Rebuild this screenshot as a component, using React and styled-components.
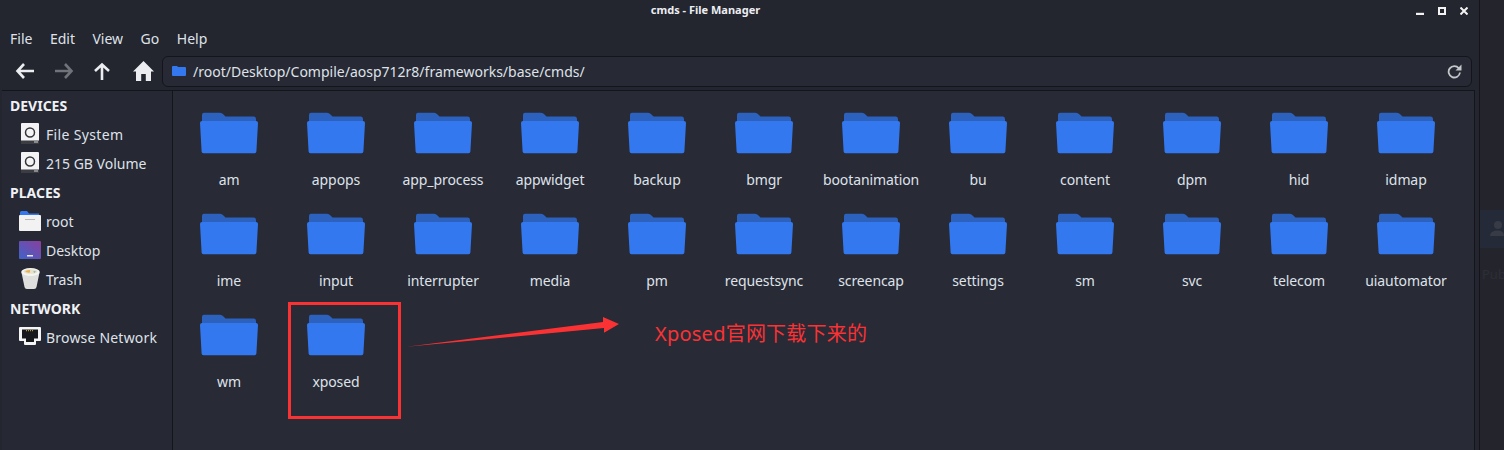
import React from "react";
import styled, { createGlobalStyle } from "styled-components";

const GlobalStyle = createGlobalStyle`
  html, body {
    margin: 0;
    padding: 0;
    background: #24252c;
    overflow: hidden;
  }
  * { box-sizing: border-box; }
`;

const Page = styled.div`
  position: relative;
  display: flex;
  width: 1504px;
  height: 450px;
  overflow: hidden;
  font-family: "Noto Sans", sans-serif;
  font-size: 14px;
  color: #e6e8ee;
`;

const Window = styled.div`
  width: 1480px;
  height: 450px;
  flex: none;
  display: flex;
  flex-direction: column;
  background: #23252f;
  border-right: 1px solid #14151b;
`;

const Backdrop = styled.div`
  flex: 1;
  min-width: 0;
  overflow: hidden;
  display: flex;
  flex-direction: column;
  padding-top: 210px;
  background: #24252c;
  color: #2c2e36;
  font-size: 13px;
`;

const BackdropTile = styled.div`
  height: 38px;
  margin-bottom: 17px;
  padding: 11px 0 0 10px;
  background: #242a38;
  color: #363b46;
`;

const BackdropLabel = styled.span`
  padding-left: 2px;
`;

const TitleBar = styled.div`
  height: 26px;
  flex: none;
  display: flex;
  align-items: center;
  position: relative;
  justify-content: center;
  font-size: 11px;
  font-weight: 700;
  color: #eceef2;
  padding: 0 68px 8px 0;
`;

const WindowButtons = styled.div`
  position: absolute;
  top: 7px;
  right: 11px;
  display: flex;
  align-items: flex-start;
  gap: 14px;
`;

const MenuBar = styled.div`
  height: 26px;
  flex: none;
  display: flex;
  gap: 17.5px;
  padding: 0 0 2px 10px;
  align-items: center;
  font-size: 14px;
  color: #dfe2e9;
`;

const Toolbar = styled.div`
  height: 38px;
  flex: none;
  display: flex;
  align-items: center;
  padding: 0 7px 0 15px;
`;

const NavButton = styled.div`
  width: ${(props) => props.$width}px;
  height: 24px;
  display: flex;
  align-items: center;
`;

const PathBar = styled.div`
  flex: 1;
  height: 31px;
  margin-left: 7px;
  display: flex;
  align-items: center;
  gap: 7px;
  padding: 0 9px 0 9px;
  background: #272934;
  border: 1px solid #14151b;
  border-radius: 6px;
  color: #dfe2e9;
`;

const PathText = styled.span`
  flex: 1;
  font-size: 14px;
`;

const Main = styled.div`
  flex: 1;
  display: flex;
  margin: 0 4px 0 2px;
  border-top: 1px solid #14151b;
  border-right: 1px solid #14151b;
  min-height: 0;
`;

const Sidebar = styled.div`
  width: 171px;
  flex: none;
  border-right: 1px solid #14151b;
  padding: 0 0 0 8px;
  background: #262833;
`;

const SectionTitle = styled.div`
  height: 29px;
  line-height: 29px;
  font-weight: 700;
  font-size: 14px;
  color: #eff1f5;
`;

const SideRow = styled.div`
  height: 29px;
  display: flex;
  align-items: center;
  gap: 5px;
  padding: 0 0 0 9px;
  letter-spacing: ${(props) => props.$spacing || 0}px;
  color: #dfe2e9;
`;

const SideIcon = styled.div`
  width: 22px;
  height: 22px;
  flex: none;
  margin-bottom: 2px;
  display: flex;
  align-items: center;
  justify-content: center;
`;

const Grid = styled.div`
  flex: 1;
  display: grid;
  grid-template-columns: repeat(12, 107px);
  grid-auto-rows: 101px;
  align-content: start;
  padding: 20px 0 0 2.5px;
  background: #282a36;
`;

const Item = styled.div`
  display: flex;
  flex-direction: column;
  align-items: center;
  color: #dfe2e9;
  line-height: 20px;
`;

const ItemLabel = styled.span`
  margin-top: 13px;
  letter-spacing: -0.1px;
  white-space: nowrap;
`;

const RedBox = styled.div`
  position: absolute;
  left: 288px;
  top: 302px;
  width: 113px;
  height: 117px;
  border: 3px solid #fb3234;
`;

const Arrow = styled.svg`
  position: absolute;
  left: 400px;
  top: 310px;
`;

const Note = styled.div`
  position: absolute;
  left: 655px;
  top: 320px;
  font-size: 20px;
  line-height: 28px;
  letter-spacing: 0.23px;
  color: #fb3234;
  font-family: "Noto Sans", "Noto Sans CJK SC", sans-serif;
`;

const FolderIcon = () => (
  <svg width="60" height="46" viewBox="0 0 60 46">
    <path
      d="M3 4Q3 1.700 5 1.700H21Q23 1.700 24.500 3.500L26.500 5.500H55Q57 5.500 57 8V14H3Z"
      fill="#2c61bd"
    />
    <path
      d="M1 12Q1 10 3 10H57Q59 10 59 12L57.400 40.500Q57.300 42.300 55.500 42.300H4.500Q2.700 42.300 2.600 40.500Z"
      fill="#3378ee"
    />
  </svg>
);

const BackIcon = ({ color }) => (
  <svg width="20" height="18" viewBox="0 0 20 18">
    <path d="M9 2L2.500 9L9 16M3 9H19" fill="none" stroke={color} strokeWidth="2.600" />
  </svg>
);

const ForwardIcon = ({ color }) => (
  <svg width="20" height="18" viewBox="0 0 20 18">
    <path d="M11 2L17.500 9L11 16M17 9H1" fill="none" stroke={color} strokeWidth="2.600" />
  </svg>
);

const UpIcon = () => (
  <svg width="18" height="18" viewBox="0 0 18 18">
    <path d="M2 9L9 2.500L16 9M9 3V18" fill="none" stroke="#ebedf0" strokeWidth="2.600" />
  </svg>
);

const HomeIcon = () => (
  <svg width="21" height="20" viewBox="0 0 21 20">
    <path d="M10.500 0L21 10.500H18V20H12.800V13H8.200V20H3V10.500H0Z" fill="#ebedf0" />
  </svg>
);

const SmallFolder = () => (
  <svg width="14" height="10" viewBox="0 0 14 10">
    <path d="M0 1Q0 0 1 0H5L6 1H13Q14 1 14 2V9Q14 10 13 10H1Q0 10 0 9Z" fill="#3378ee" />
  </svg>
);

const ReloadIcon = () => (
  <svg width="15" height="15" viewBox="0 0 15 15">
    <path d="M11.800 4.200A5.700 5.700 0 1 0 13 8.500" fill="none" stroke="#c4c6ca" strokeWidth="1.800" />
    <path d="M14.500 0.500V6.500H8.500Z" fill="#c4c6ca" />
  </svg>
);

const DiskIcon = () => (
  <svg width="18" height="21" viewBox="0 0 18 21">
    <rect width="18" height="20" rx="1" fill="#f4f4f4" />
    <rect y="17.500" width="18" height="3.500" fill="#3b3d42" />
    <rect x="13" y="18.500" width="4" height="1" fill="#d8d8d8" />
    <circle cx="9" cy="9.500" r="4.500" fill="none" stroke="#33353b" strokeWidth="1.500" />
  </svg>
);

const HomeFolderIcon = () => (
  <svg width="22" height="20" viewBox="0 0 22 20">
    <path d="M1 1.500Q1 0 2.500 0H8L10 2.500H20V6H1Z" fill="#3378ee" />
    <rect y="4" width="22" height="16" rx="1" fill="#f2f2f2" />
    <rect x="6" y="8" width="10" height="1" fill="#b9b9b9" />
  </svg>
);

const DesktopIcon = () => (
  <svg width="22" height="18" viewBox="0 0 22 18">
    <defs>
      <linearGradient id="desk" x1="0" y1="1" x2="1" y2="0">
        <stop offset="0" stopColor="#3f63c9" />
        <stop offset="1" stopColor="#8a3f9e" />
      </linearGradient>
    </defs>
    <rect width="22" height="18" rx="1" fill="url(#desk)" />
    <rect x="8" y="14" width="6" height="1.500" fill="#e8e8f0" />
  </svg>
);

const TrashIcon = () => (
  <svg width="19" height="21" viewBox="0 0 19 21">
    <path d="M0.500 4.500L3.500 19Q3.800 21 6 21H13Q15.200 21 15.500 19L18.500 4.500Z" fill="#dfdfdd" />
    <ellipse cx="9.500" cy="4" rx="9.300" ry="4" fill="#f4f4f2" />
    <ellipse cx="9.500" cy="3.500" rx="7" ry="2.300" fill="#e8e2c8" />
    <path d="M4 3.500Q6 1.500 9 2V4.500Q6 5 4 3.500Z" fill="#e9b25a" />
    <path d="M12.500 3L15 3.500L13 5Z" fill="#6fb1c9" />
  </svg>
);

const NetworkIcon = () => (
  <svg width="22" height="19" viewBox="0 0 22 19">
    <path d="M1 0H21Q22 0 22 1V13Q22 14 21 14H17V17Q17 18 16 18H6Q5 18 5 17V14H1Q0 14 0 13V1Q0 0 1 0Z" fill="#f4f4f4" />
    <path d="M3 2.500H19V11.500H15V15H7V11.500H3Z" fill="#17181c" />
    <path d="M7 3.500H15" stroke="#b59a4a" strokeWidth="1.500" strokeDasharray="1 1" />
  </svg>
);

const folders = [
  "am", "appops", "app_process", "appwidget", "backup", "bmgr",
  "bootanimation", "bu", "content", "dpm", "hid", "idmap",
  "ime", "input", "interrupter", "media", "pm", "requestsync",
  "screencap", "settings", "sm", "svc", "telecom", "uiautomator",
  "wm", "xposed",
];

const menus = ["File", "Edit", "View", "Go", "Help"];

const App = () => {
  return (
    <Page>
      <GlobalStyle />
      <Window>
        <TitleBar>
          cmds - File Manager
          <WindowButtons>
            <svg width="8" height="8" viewBox="0 0 8 8">
              <rect y="5.800" width="8" height="2.200" fill="#f2f2f2" />
            </svg>
            <svg width="8" height="8" viewBox="0 0 8 8">
              <rect x="1" y="1" width="6" height="6" fill="none" stroke="#f2f2f2" strokeWidth="2" />
            </svg>
            <svg width="8" height="8" viewBox="0 0 8 8">
              <path d="M0.500 0.500L7.500 7.500M7.500 0.500L0.500 7.500" stroke="#f2f2f2" strokeWidth="2" />
            </svg>
          </WindowButtons>
        </TitleBar>
        <MenuBar>
          {menus.map((menu) => (
            <span key={menu}>{menu}</span>
          ))}
        </MenuBar>
        <Toolbar>
          <NavButton $width={39}><BackIcon color="#ebedf0" /></NavButton>
          <NavButton $width={39}><ForwardIcon color="#70737a" /></NavButton>
          <NavButton $width={40}><UpIcon /></NavButton>
          <NavButton $width={22}><HomeIcon /></NavButton>
          <PathBar>
            <SmallFolder />
            <PathText>/root/Desktop/Compile/aosp712r8/frameworks/base/cmds/</PathText>
            <ReloadIcon />
          </PathBar>
        </Toolbar>
        <Main>
          <Sidebar>
            <SectionTitle>DEVICES</SectionTitle>
            <SideRow $spacing={0.35}><SideIcon><DiskIcon /></SideIcon>File System</SideRow>
            <SideRow><SideIcon><DiskIcon /></SideIcon>215 GB Volume</SideRow>
            <SectionTitle>PLACES</SectionTitle>
            <SideRow><SideIcon><HomeFolderIcon /></SideIcon>root</SideRow>
            <SideRow><SideIcon><DesktopIcon /></SideIcon>Desktop</SideRow>
            <SideRow><SideIcon><TrashIcon /></SideIcon>Trash</SideRow>
            <SectionTitle>NETWORK</SectionTitle>
            <SideRow $spacing={0.2}><SideIcon><NetworkIcon /></SideIcon>Browse Network</SideRow>
          </Sidebar>
          <Grid>
            {folders.map((name) => (
              <Item key={name}>
                <FolderIcon />
                <ItemLabel>{name}</ItemLabel>
              </Item>
            ))}
          </Grid>
        </Main>
      </Window>
      <Backdrop>
        <BackdropTile>
          <svg width="14" height="16" viewBox="0 0 14 16">
            <circle cx="8" cy="4" r="4" fill="currentColor" />
            <path d="M0 15Q0 9.500 8 9.500Q14 9.500 14 15Z" fill="currentColor" />
          </svg>
        </BackdropTile>
        <BackdropLabel>Pub</BackdropLabel>
      </Backdrop>
      <RedBox />
      <Arrow width="225" height="40" viewBox="0 0 225 40">
        <path d="M6.500 36.800L203 12L203 7L219 14L204 22.700L204 18Z" fill="#fb3234" />
      </Arrow>
      <Note>Xposed官网下载下来的</Note>
    </Page>
  );
};

export default App;
